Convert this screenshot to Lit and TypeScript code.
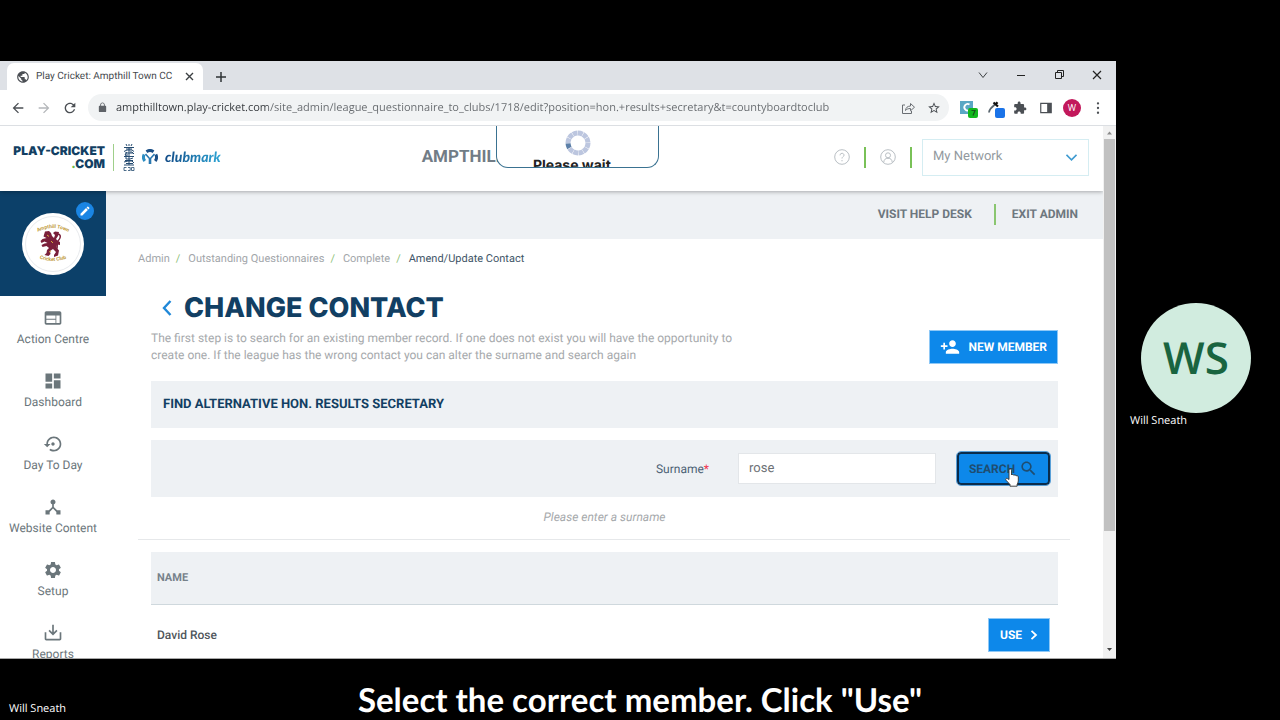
import { LitElement, html, css, svg } from "lit";
import { customElement, property } from "lit/decorators.js";

const ICONS: Record<string, string> = {
  web: "M20 4H4c-1.1 0-1.99.9-1.99 2L2 18c0 1.1.9 2 2 2h16c1.1 0 2-.9 2-2V6c0-1.1-.9-2-2-2zm-5 14H4v-4h11v4zm0-5H4V9h11v4zm5 5h-4V9h4v9z",
  dashboard: "M3 13h8V3H3v10zm0 8h8v-6H3v6zm10 0h8V11h-8v10zm0-18v6h8V3h-8z",
  restore: "M14 12c0-1.1-.9-2-2-2s-2 .9-2 2 .9 2 2 2 2-.9 2-2zm-1-9c-4.97 0-9 4.03-9 9H1l4 4 4-4H6c0-3.87 3.13-7 7-7s7 3.13 7 7-3.13 7-7 7c-1.51 0-2.91-.49-4.06-1.3l-1.42 1.44C9.04 20.3 10.94 21 13 21c4.97 0 9-4.03 9-9s-4.03-9-9-9z",
  hub: "M17 16l-4-4V8.82C14.16 8.4 15 7.3 15 6c0-1.66-1.34-3-3-3S9 4.34 9 6c0 1.3.84 2.4 2 2.82V12l-4 4H3v5h5v-3.05l4-4.2 4 4.2V21h5v-5h-4z",
  settings: "M19.14 12.94c.04-.3.06-.61.06-.94 0-.32-.02-.64-.07-.94l2.03-1.58c.18-.14.23-.41.12-.61l-1.92-3.32c-.12-.22-.37-.29-.59-.22l-2.39.96c-.5-.38-1.03-.7-1.62-.94l-.36-2.54c-.04-.24-.24-.41-.48-.41h-3.84c-.24 0-.43.17-.47.41l-.36 2.54c-.59.24-1.13.57-1.62.94l-2.39-.96c-.22-.08-.47 0-.59.22L2.74 8.87c-.12.21-.08.47.12.61l2.03 1.58c-.05.3-.09.63-.09.94s.02.64.07.94l-2.03 1.58c-.18.14-.23.41-.12.61l1.92 3.32c.12.22.37.29.59.22l2.39-.96c.5.38 1.03.7 1.62.94l.36 2.54c.05.24.24.41.48.41h3.84c.24 0 .44-.17.47-.41l.36-2.54c.59-.24 1.13-.56 1.62-.94l2.39.96c.22.08.47 0 .59-.22l1.92-3.32c.12-.22.07-.47-.12-.61l-2.01-1.58zM12 15.6c-1.98 0-3.6-1.62-3.6-3.6s1.62-3.6 3.6-3.6 3.6 1.62 3.6 3.6-1.62 3.6-3.6 3.6z",
  tray: "M13 2v9.2l3-3 1.4 1.4L12 15 6.600 9.600 8 8.200l3 3V2zM2 11h2v8h16v-8h2v8c0 1.100-.9 2-2 2H4c-1.100 0-2-.9-2-2z",
  personAdd: "M15 12c2.21 0 4-1.79 4-4s-1.79-4-4-4-4 1.79-4 4 1.79 4 4 4zm-9-2V7H4v3H1v2h3v3h2v-3h3v-2H6zm9 4c-2.67 0-8 1.34-8 4v2h16v-2c0-2.66-5.33-4-8-4z",
  search: "M15.5 14h-.79l-.28-.27C15.41 12.59 16 11.11 16 9.5 16 5.91 13.09 3 9.5 3S3 5.91 3 9.5 5.91 16 9.5 16c1.61 0 3.09-.59 4.23-1.57l.27.28v.79l5 4.99L20.49 19l-4.99-5zm-6 0C7.01 14 5 11.99 5 9.5S7.01 5 9.5 5 14 7.01 14 9.5 11.99 14 9.5 14z",
  edit: "M3 17.25V21h3.75L17.81 9.94l-3.75-3.75L3 17.25zM20.71 7.04c.39-.39.39-1.02 0-1.41l-2.34-2.34c-.39-.39-1.02-.39-1.41 0l-1.83 1.83 3.75 3.75 1.83-1.83z",
  reload: "M17.65 6.35C16.2 4.9 14.21 4 12 4c-4.42 0-7.99 3.58-7.99 8s3.57 8 7.99 8c3.73 0 6.84-2.55 7.73-6h-2.08c-.82 2.33-3.04 4-5.65 4-3.31 0-6-2.69-6-6s2.69-6 6-6c1.66 0 3.14.69 4.22 1.78L13 11h7V4l-2.35 2.35z",
  back: "M20 11H7.83l5.59-5.59L12 4l-8 8 8 8 1.41-1.41L7.83 13H20v-2z",
  forward: "M12 4l-1.41 1.41L16.17 11H4v2h12.17l-5.58 5.59L12 20l8-8z",
  lock: "M18 8h-1V6c0-2.76-2.24-5-5-5S7 3.24 7 6v2H6c-1.1 0-2 .9-2 2v10c0 1.1.9 2 2 2h12c1.1 0 2-.9 2-2V10c0-1.1-.9-2-2-2zM15.1 8H8.900V6c0-1.71 1.39-3.1 3.1-3.1s3.1 1.39 3.1 3.1v2z",
  star: "M22 9.24l-7.19-.62L12 2 9.19 8.63 2 9.24l5.46 4.73L5.82 21 12 17.27 18.18 21l-1.63-7.03L22 9.24zM12 15.4l-3.76 2.27 1-4.28-3.32-2.88 4.38-.38L12 6.1l1.71 4.04 4.38.38-3.32 2.88 1 4.28L12 15.4z",
  puzzle: "M20.5 11H19V7c0-1.1-.9-2-2-2h-4V3.5C13 2.12 11.88 1 10.5 1S8 2.12 8 3.5V5H4c-1.1 0-1.99.9-1.99 2v3.8H3.5c1.49 0 2.7 1.21 2.7 2.7s-1.21 2.7-2.7 2.7H2V20c0 1.1.9 2 2 2h3.8v-1.5c0-1.49 1.21-2.7 2.7-2.7 1.49 0 2.7 1.21 2.7 2.7V22H17c1.1 0 2-.9 2-2v-4h1.5c1.38 0 2.5-1.12 2.5-2.5S21.88 11 20.5 11z",
  globe: "M12 2C6.48 2 2 6.48 2 12s4.48 10 10 10 10-4.48 10-10S17.52 2 12 2zm-1 17.93c-3.95-.49-7-3.85-7-7.930 0-.62.08-1.21.21-1.79L9 15v1c0 1.1.9 2 2 2v1.930zm6.900-2.540c-.26-.81-1-1.39-1.9-1.39h-1v-3c0-.55-.45-1-1-1H8v-2h2c.55 0 1-.45 1-1V7h2c1.1 0 2-.9 2-2v-.41c2.930 1.190 5 4.060 5 7.410 0 2.080-.8 3.970-2.100 5.390z",
  panel: "M2 3h20v18H2zM4 5v14h10V5z",
  dots: "M12 2a2 2 0 1 1 0 4 2 2 0 0 1 0-4zm0 8a2 2 0 1 1 0 4 2 2 0 0 1 0-4zm0 8a2 2 0 1 1 0 4 2 2 0 0 1 0-4z",
};

@customElement("ui-icon")
class UiIcon extends LitElement {
  @property() name = "";
  static styles = css`
    :host { display: inline-flex; width: 16px; height: 16px; flex: none; }
    svg { width: 100%; height: 100%; display: block; fill: currentColor; }
    path { fill-rule: evenodd; }
  `;
  render() {
    return html`<svg viewBox="0 0 24 24" aria-hidden="true"><path d=${ICONS[this.name]}></path></svg>`;
  }
}

@customElement("browser-chrome")
class BrowserChrome extends LitElement {
  static styles = css`
    :host { display: block; flex: none; font-family: "Open Sans", "Noto Sans", sans-serif; }
    button { border: 0; background: none; padding: 0; display: flex; align-items: center; justify-content: center; color: #4b4f54; font: inherit; }
    svg { display: block; overflow: visible; }
    .tabs { display: flex; align-items: flex-end; height: 29px; background: #dee1e6; padding-left: 7px; }
    .tab { display: flex; align-items: center; width: 196px; height: 27px; background: #fff; border-radius: 7px 7px 0 0; padding: 0 7px 0 9px; box-sizing: border-box; }
    .tab ui-icon { width: 14px; height: 14px; color: #4b4f54; }
    .title { flex: 1; margin-left: 6px; font-size: 10px; line-height: 14px; color: #45494d; white-space: nowrap; font-family: Roboto, sans-serif; }
    .tab button { width: 14px; height: 14px; }
    .add { width: 36px; height: 27px; }
    .controls { margin-left: auto; display: flex; height: 27px; align-self: flex-start; }
    .controls button { width: 38px; }
    .bar { display: flex; align-items: center; height: 35px; background: #fff; padding: 0 5px; border-bottom: 1px solid #dcdfe3; }
    .bar button { width: 26px; height: 26px; flex: none; }
    .bar .off { color: #b4b7ba; }
    .bar .ext { width: 14px; height: 14px; }
    .pill { flex: 1; min-width: 0; display: flex; align-items: center; height: 27px; border-radius: 14px; background: #f1f3f4; margin: 0 6px 0 5px; padding: 0 2px 0 9px; }
    .pill > ui-icon { width: 11px; height: 11px; color: #5f6368; }
    .url { text-rendering: inherit; flex: 1; min-width: 0; border: 0; padding: 0; margin-left: 8px; font-family: inherit; font-size: 11px; line-height: 20px; height: 20px; outline: 0; color: transparent; background: linear-gradient(to right, #33373b 152px, #65696d 152px); background-clip: text; -webkit-background-clip: text; }
    .me { width: 18px; height: 18px; border-radius: 50%; background: #c2185b; color: #fff; font-size: 9px; line-height: 18px; text-align: center; }
  `;
  render() {
    return html`
      <div class="tabs">
        <div class="tab">
          <ui-icon name="globe"></ui-icon>
          <span class="title">Play Cricket: Ampthill Town CC</span>
          <button aria-label="Close tab"><svg width="7" height="7" viewBox="0 0 7 7" stroke="#3c4043" stroke-width="1.400"><path d="M0 0l7 7M7 0L0 7"/></svg></button>
        </div>
        <button class="add" aria-label="New tab"><svg width="10" height="10" viewBox="0 0 10 10" stroke="#2f3336" stroke-width="1.500"><path d="M5 0v10M0 5h10"/></svg></button>
        <div class="controls">
          <button aria-label="Search tabs"><svg width="8" height="6" viewBox="0 0 8 6" fill="none" stroke="#3c4043"><path d="M0 0.500l4 5 4-5"/></svg></button>
          <button aria-label="Minimise"><svg width="8" height="8" viewBox="0 0 8 8" stroke="#222"><path d="M0 4.500h8"/></svg></button>
          <button aria-label="Restore"><svg width="9" height="9" viewBox="0 0 9 9" fill="none" stroke="#222"><path d="M.5 2.500h6v6h-6zM2.500 2.500v-2h6v6h-2"/></svg></button>
          <button aria-label="Close"><svg width="8" height="8" viewBox="0 0 8 8" stroke="#222" stroke-width="1.200"><path d="M0 0l8 8M8 0L0 8"/></svg></button>
        </div>
      </div>
      <div class="bar">
        <button aria-label="Back"><ui-icon name="back"></ui-icon></button>
        <button class="off" aria-label="Forward"><ui-icon name="forward"></ui-icon></button>
        <button aria-label="Reload"><ui-icon name="reload"></ui-icon></button>
        <div class="pill">
          <ui-icon name="lock"></ui-icon>
          <input class="url" aria-label="Address" .value=${"ampthilltown.play-cricket.com/site_admin/league_questionnaire_to_clubs/1718/edit?position=hon.+results+secretary&t=countyboardtoclub"} />
          <button aria-label="Share"><svg width="13" height="12" viewBox="0 0 13 12" fill="none" stroke="#6a6e73"><path d="M3 3H.5v8.500h9V9M3.500 8.500c.3-3 2-4.300 5-4.500V1.500l4 3.700-4 3.600V6.500c-2.300 0-3.800.6-5 2z"/></svg></button>
          <button aria-label="Bookmark"><ui-icon class="ext" name="star"></ui-icon></button>
        </div>
        <button aria-label="Colour extension">
          <svg width="18" height="18" viewBox="0 0 18 18"><path d="M1 2h13v13H1z" fill="#5aa7c4"/><path d="M10.500 5.500a3.300 3.300 0 1 0 0 5.500" fill="none" stroke="#fff" stroke-width="1.800"/><rect x="9" y="9" width="10" height="10" rx="2" fill="#12b81c"/><path d="M12.500 11.500h3.500l-2 5" fill="none" stroke="#17551b" stroke-width="1.200"/></svg>
        </button>
        <button aria-label="Colour picker">
          <svg width="18" height="18" viewBox="0 0 18 18"><path d="M4 13.500c.3-3 1.500-4 6-8" fill="none" stroke="#59666f" stroke-width="1.800"/><path d="M8.500 3.500l4.500 4M10.500 5.500l2-2.300" fill="none" stroke="#111" stroke-width="2.200"/><rect x="10" y="9" width="10" height="10" rx="2" fill="#1a73e8"/></svg>
        </button>
        <button aria-label="Extensions"><ui-icon class="ext" name="puzzle"></ui-icon></button>
        <button aria-label="Side panel"><ui-icon class="ext" name="panel"></ui-icon></button>
        <button aria-label="Profile"><span class="me">W</span></button>
        <button aria-label="Menu"><ui-icon class="ext" name="dots"></ui-icon></button>
      </div>
    `;
  }
}

@customElement("site-header")
class SiteHeader extends LitElement {
  static styles = css`
    :host { display: flex; align-items: center; height: 65px; box-sizing: border-box; padding: 0 14px 3px 12px; background: #fff; box-shadow: 0 1px 4px rgba(0, 0, 0, 0.3); position: relative; z-index: 1; flex: none; }
    svg { display: block; }
    .logo { width: 93px; text-align: right; font: 900 12px/13px Inter, sans-serif; color: #123f63; text-decoration: none; white-space: nowrap; }
    .dot { color: #6cb84a; }
    .rule { width: 1px; height: 27px; background: #9fcf8a; margin: 0 9px 0 8px; }
    .brand { display: flex; align-items: center; gap: 7px; }
    .mark { font: italic 900 14px/18px Lato, sans-serif; background: linear-gradient(to right, #114a86, #2fa8d8); background-clip: text; -webkit-background-clip: text; color: transparent; padding-right: 2px; }
    .club { margin: 0 auto 0 199px; font: 700 17px/22px Roboto, sans-serif; color: #717c86; white-space: nowrap; }
    .tools { display: flex; align-items: center; }
    .tools button { border: 0; background: none; padding: 0; width: 16px; height: 16px; }
    .bar { width: 2px; height: 21px; background: #79c157; margin: 0 14px; }
    .bar.last { margin-right: 10px; }
    .pick { position: relative; display: flex; align-items: center; }
    select { appearance: none; text-rendering: inherit; width: 167px; height: 37px; border: 1px solid #d5edf2; background: #fff; padding: 0 10px; font: 400 13px/20px Roboto, sans-serif; color: #92999e; border-radius: 0; }
    .pick svg { position: absolute; right: 12px; pointer-events: none; }
  `;
  render() {
    const ring = "#b9bfc4";
    return html`
      <a class="logo" href="#">PLAY-CRICKET<br /><span class="dot">.</span>COM</a>
      <span class="rule"></span>
      <div class="brand">
        <svg width="12" height="27" viewBox="0 0 12 27" fill="none" stroke="#254b70" aria-label="ECB">
          <path d="M3 0l1 2M6 0v2M9 0L8 2M1 3.500h10M3 5h6M1 7.500l3-1.500h5L11 7.500M2 9h8M4 8l-2 3h3M7 8h2l2 2M1 12.500h10M3 11v4h4l3-1M6 3v18M2 16.500h8M1 18l4-1h4l2 2M3 19.500h7M1 21h10"/>
          <path d="M1 23.500h2.500M1 26.500h2.500M1 23.500v3M5 23.500h2.200v3H5M8.500 23.500h2.500v3H8.500z" stroke-width=".8"/>
        </svg>
        <svg width="16" height="16" viewBox="0 0 16 16" fill="none" stroke-width="3">
          <path d="M4.500 2.700a6 6 0 0 1 7 0" stroke="#1b4f86"/>
          <path d="M2.200 5.500a6 6 0 0 0 .6 6.500" stroke="#2d8ec2"/>
          <path d="M13.800 5.500a6 6 0 0 1-.6 6.500" stroke="#1b4f86"/>
          <path d="M3.500 5l4 4.500v5.500M12.500 5l-4 4.500v5.500" stroke="#2a78b0" stroke-width="1.600"/>
        </svg>
        <span class="mark">clubmark</span>
      </div>
      <span class="club">AMPTHILL TOWN CC</span>
      <div class="tools">
        <button aria-label="Help"><svg width="16" height="16" viewBox="0 0 16 16" fill="none" stroke=${ring}><circle cx="8" cy="8" r="7.300"/><path d="M6 6.300c0-2.800 4.200-2.500 4 0-.1 1.300-2 1.500-2 3.200M8 11v1.300"/></svg></button>
        <span class="bar"></span>
        <button aria-label="Account"><svg width="16" height="16" viewBox="0 0 16 16" fill="none" stroke=${ring}><circle cx="8" cy="8" r="7.300"/><circle cx="8" cy="6.300" r="2.500"/><path d="M3.800 13c.3-2.500 1.500-3.700 4.200-3.700s3.900 1.200 4.200 3.700"/></svg></button>
        <span class="bar last"></span>
        <div class="pick">
          <select aria-label="Network"><option>My Network</option></select>
          <svg width="11" height="7" viewBox="0 0 11 7" fill="none" stroke="#3f9bd1" stroke-width="1.600"><path d="M.5.800l5 5 5-5"/></svg>
        </div>
      </div>
    `;
  }
}

@customElement("side-nav")
class SideNav extends LitElement {
  static styles = css`
    :host { display: block; width: 106px; flex: none; background: #fff; box-shadow: 1px 0 4px rgba(0, 0, 0, 0.14); font-family: Roboto, sans-serif; }
    .club { position: relative; height: 105px; background: #0c4069; display: flex; align-items: center; justify-content: center; }
    .edit { position: absolute; top: 11px; right: 12px; width: 18px; height: 18px; border: 0; border-radius: 50%; padding: 0; background: #1a85e4; color: #fff; display: flex; align-items: center; justify-content: center; }
    .edit ui-icon { width: 12px; height: 12px; }
    a { display: flex; flex-direction: column; align-items: center; height: 63px; padding-top: 12px; box-sizing: border-box; gap: 3px; color: #6b767b; font-size: 12px; line-height: 16px; text-decoration: none; white-space: nowrap; }
    a ui-icon { width: 20px; height: 20px; }
  `;
  items = [["web", "Action Centre"], ["dashboard", "Dashboard"], ["restore", "Day To Day"], ["hub", "Website Content"], ["settings", "Setup"], ["tray", "Reports"]];
  render() {
    return html`
      <div class="club">
        <svg width="62" height="62" viewBox="0 0 62 62" aria-label="Club crest">
          <defs><path id="top" d="M12 21Q31 9 50 21"/><path id="low" d="M14 44Q31 52 48 44"/></defs>
          <circle cx="31" cy="31" r="31" fill="#fff"/><circle cx="31" cy="31" r="27.500" fill="none" stroke="#d8dce0" stroke-width=".6"/>
          <g font-family="Roboto, sans-serif" font-size="5" font-weight="700" fill="#c19a3a" text-anchor="middle">
            <text><textPath href="#top" startOffset="50%">Ampthill Town</textPath></text>
            <text><textPath href="#low" startOffset="50%">Cricket Club</textPath></text>
          </g>
          <path d="M23 18.500l4-.5 2 2 1 3 2 2 1-3-2-2 2-1.500 4 .5-1 4-2 3 2 2 2 1v3l-3-.5-.5 3 2.500 3-1 5-4 1.500v-2l2-3-3-3-3 2 .5 3-2 2-4-1 2-2 .5-3 2-2-2.500-2-4 1-1-2 3-1.500 3-.5-3-1.500-3 1.500-1-2 2-2 4-1-3-1.500z" fill="#7a1f3a"/>
          <path d="M36 21c4 1 2 5 0 7s1 5-2 9" fill="none" stroke="#7a1f3a" stroke-width="1.400"/>
          <path d="M25 22l2 1.500M29 28l2 2M27 39l2-1" stroke="#d8a93a" stroke-width="1"/>
        </svg>
        <button class="edit" aria-label="Edit club"><ui-icon name="edit"></ui-icon></button>
      </div>
      <nav>${this.items.map(([i, t]) => html`<a href="#"><ui-icon name=${i}></ui-icon>${t}</a>`)}</nav>
    `;
  }
}

@customElement("contact-page")
class ContactPage extends LitElement {
  static styles = css`
    :host { display: block; flex: 1; min-width: 0; font-family: Roboto, sans-serif; background: #fff; }
    button, input { text-rendering: inherit; }
    .links { display: flex; justify-content: flex-end; align-items: center; height: 48px; padding: 0 25px 2px; box-sizing: border-box; background: #eef1f4; }
    .links a { color: #6d777e; font-size: 12px; line-height: 16px; font-weight: 700; text-decoration: none; }
    .links span { width: 2px; height: 21px; background: #8ac670; margin: 0 16px 0 22px; }
    .page { padding: 12px 33px 0 32px; }
    .crumbs { display: flex; gap: 8px; font-size: 11px; line-height: 16px; }
    .crumbs a { color: #a2a6aa; text-decoration: none; }
    .crumbs a::after { content: "/"; color: #8cbf77; margin-left: 6px; }
    .crumbs span { color: #3f5668; }
    .inner { padding: 0 12px 0 13px; }
    .title { display: flex; align-items: center; gap: 12px; height: 34px; margin-top: 24px; padding-left: 11px; }
    .title a { display: flex; }
    h1 { margin: 0; font: 800 27px/34px Inter, sans-serif; color: #123f63; white-space: nowrap; }
    .intro { display: flex; justify-content: space-between; align-items: flex-start; padding-top: 5px; }
    p { margin: 0; font-size: 12px; line-height: 17px; color: #a6a9ac; }
    .intro p { max-width: 600px; }
    .blue { display: flex; align-items: center; justify-content: center; gap: 8px; height: 34px; padding: 0 10px; border: 1px solid #8ec8f6; background: #0d88ea; color: #fff; font: 700 12px/16px Roboto, sans-serif; border-radius: 0; white-space: nowrap; box-sizing: border-box; }
    .new ui-icon { width: 20px; height: 20px; }
    h2 { margin: 17px 0 0; padding: 0 12px; background: #eef1f4; color: #123f63; font-size: 13px; line-height: 47px; font-weight: 700; }
    .find { display: flex; justify-content: flex-end; align-items: center; height: 57px; margin-top: 12px; padding-right: 8px; background: #eef1f4; }
    label { font-size: 12px; line-height: 16px; color: #4c6174; margin-right: 29px; }
    label i { color: #ee3550; font-style: normal; }
    input { width: 198px; height: 31px; box-sizing: border-box; border: 1px solid #e3e6e9; background: #fff; padding: 0 10px; font: 13px/20px Roboto, sans-serif; color: #6d7175; margin-right: 21px; border-radius: 0; }
    .go { position: relative; width: 93px; height: 33px; padding: 0 8px; gap: 4px; border: 2px solid #0a2c4c; border-radius: 4px; outline: 1px solid #5aa0d8; color: #1f4d70; }
    .go ui-icon { width: 19px; height: 19px; }
    .hand { position: absolute; left: 45px; top: 14px; }
    .hint { text-align: center; font-style: italic; font-size: 12px; line-height: 16px; padding: 12px 0 14px; }
    hr { border: 0; height: 1px; background: #e6e8ea; margin: 0 0 12px; }
    table { width: 100%; border-collapse: collapse; }
    th { height: 52px; padding: 0 6px; text-align: left; background: #eef1f4; border-bottom: 1px solid #cfd8dd; color: #76818a; font-size: 11px; line-height: 16px; font-weight: 700; }
    td { height: 60px; padding: 0 6px; color: #50565b; font-size: 12px; line-height: 17px; font-weight: 500; }
    .act { padding-right: 8px; }
    .act button { margin-left: auto; width: 62px; }
  `;
  render() {
    return html`
      <div class="links"><a href="#">VISIT HELP DESK</a><span></span><a href="#">EXIT ADMIN</a></div>
      <div class="page">
        <div class="crumbs"><a href="#">Admin</a><a href="#">Outstanding Questionnaires</a><a href="#">Complete</a><span>Amend/Update Contact</span></div>
        <div class="inner">
          <div class="title">
            <a href="#" aria-label="Back"><svg width="10" height="16" viewBox="0 0 10 16" fill="none" stroke="#2088d8" stroke-width="2.400"><path d="M8.500 1L2 8l6.500 7"/></svg></a>
            <h1>CHANGE CONTACT</h1>
          </div>
          <div class="intro">
            <p>The first step is to search for an existing member record. If one does not exist you will have the opportunity to create one. If the league has the wrong contact you can alter the surname and search again</p>
            <button class="blue new"><ui-icon name="personAdd"></ui-icon>NEW MEMBER</button>
          </div>
          <h2>FIND ALTERNATIVE HON. RESULTS SECRETARY</h2>
          <div class="find">
            <label for="surname">Surname<i>*</i></label>
            <input id="surname" .value=${"rose"} />
            <button class="blue go">SEARCH <ui-icon name="search"></ui-icon>
              <svg class="hand" width="16" height="20" viewBox="0 0 16 20" fill="#fff" stroke="#333" stroke-width=".9" aria-hidden="true"><path d="M5 11.500V2.200C5 .5 7.500.5 7.500 2.200V7c.3-.9 2.200-.8 2.400.4.400-.8 2.200-.6 2.300.6.400-.6 2.100-.4 2.100.9v4.100c0 1.500-.8 2.500-1.200 3.500v1.700H6v-1.700L2 12.200C1 10.900 2.500 9.800 3.500 10.600z"/></svg>
            </button>
          </div>
          <p class="hint">Please enter a surname</p>
        </div>
        <hr />
        <div class="inner">
          <table>
            <thead><tr><th colspan="2">NAME</th></tr></thead>
            <tbody><tr><td>David Rose</td><td class="act"><button class="blue">USE <svg width="8" height="10" viewBox="0 0 8 10" fill="none" stroke="#fff" stroke-width="1.800"><path d="M1.500.8L6 5 1.500 9.200"/></svg></button></td></tr></tbody>
          </table>
        </div>
      </div>
    `;
  }
}

@customElement("app-root")
class AppRoot extends LitElement {
  static styles = css`
    :host { display: flex; flex-direction: column; height: 100vh; background: #000; color: #fff; font-family: "Open Sans", "Noto Sans", sans-serif; text-rendering: geometricPrecision; }
    .stage { flex: 1; min-height: 0; display: flex; padding-top: 61px; }
    .window { flex: 1; min-width: 0; display: flex; flex-direction: column; overflow: hidden; background: #fff; }
    .view { flex: 1; min-height: 0; display: flex; border-bottom: 1px solid #a8a8a8; }
    .site { position: relative; flex: 1; min-width: 0; display: flex; flex-direction: column; overflow: hidden; }
    .body { flex: 1; min-height: 0; display: flex; overflow: hidden; }
    .wait { position: absolute; z-index: 2; top: 0; left: 45%; width: 163px; height: 42px; box-sizing: border-box; border: 1px solid #3a7291; border-top: 0; border-radius: 0 0 12px 12px; background: #fff; overflow: hidden; display: flex; flex-direction: column; align-items: center; padding-top: 4px; color: #222; font: 700 14px/20px Inter, sans-serif; }
    .wait svg { flex: none; }
    .wait span { margin-right: 12px; }
    .scroll { width: 13px; flex: none; display: flex; flex-direction: column; align-items: center; justify-content: space-between; background: #f1f1f1; }
    .scroll svg { flex: none; display: block; }
    .track { flex: 1; width: 11px; }
    .thumb { height: 78%; background: #c1c1c1; }
    .people { width: 164px; flex: none; display: flex; flex-direction: column; justify-content: center; gap: 1px; padding: 11px 14px 0; box-sizing: border-box; }
    .avatar { width: 110px; height: 110px; margin-left: 11px; border-radius: 50%; background: #d1ecdf; color: #19643f; font-size: 44px; line-height: 108px; text-align: center; font-weight: 600; }
    .name { font-size: 11px; line-height: 14px; }
    .foot { height: 61px; flex: none; display: grid; grid-template-columns: 1fr auto 1fr; align-items: end; }
    .foot .name { padding: 0 0 4px 9px; }
    .caption { font: 700 33px/38px Lato, sans-serif; align-self: center; padding-top: 20px; }
  `;
  render() {
    const spokes = Array.from({ length: 12 }, (_, i) => svg`<path d="M13 0.500a12.500 12.500 0 0 1 5.700 1.400L16.500 6.500A8 8 0 0 0 13 5.500z" fill=${i === 8 ? "#5c7fa8" : "#bcc6df"} transform=${`rotate(${i * 30} 13 13)`}/>`);
    return html`
      <div class="stage">
        <div class="window">
          <browser-chrome></browser-chrome>
          <div class="view">
            <div class="site">
              <site-header></site-header>
              <div class="body"><side-nav></side-nav><contact-page></contact-page></div>
              <div class="wait" role="status"><svg width="26" height="26" viewBox="0 0 26 26">${spokes}</svg><span>Please wait</span></div>
            </div>
            <div class="scroll">
              <svg width="11" height="13" viewBox="0 0 11 13"><path d="M3 8.500l2.500-3 2.500 3z" fill="#8a8a8a"/></svg>
              <div class="track"><div class="thumb"></div></div>
              <svg width="11" height="16" viewBox="0 0 11 16"><path d="M3 6l2.500 3L8 6z" fill="#444"/></svg>
            </div>
          </div>
        </div>
        <div class="people"><div class="avatar">WS</div><span class="name">Will Sneath</span></div>
      </div>
      <div class="foot"><span class="name">Will Sneath</span><span class="caption">Select the correct member. Click "Use"</span></div>
    `;
  }
}
